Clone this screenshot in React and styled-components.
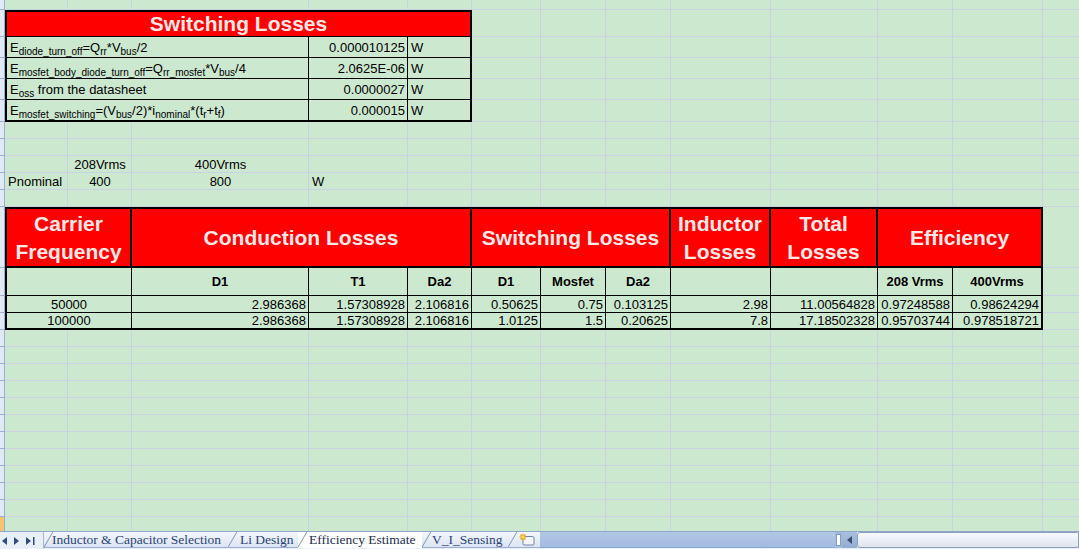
import React from 'react';
import styled, { createGlobalStyle } from 'styled-components';

const GlobalStyle = createGlobalStyle`
  *, *::before, *::after { box-sizing: border-box; }
  html, body { margin: 0; padding: 0; overflow: hidden; background: #cce8cf; }
  body { font-family: "Liberation Sans", Arial, sans-serif; color: #000; }
`;

/* column widths: row-header strip, then columns A..M */
const COLS = [5, 63, 64, 177, 99, 64, 69, 65, 65, 100, 107, 75, 90, 37];
/* row heights, top partial row first */
const ROWS = [10, 27, 21, 21, 21, 22, 17, 17, 17, 17, 17, 61, 28, 17, 17, ...Array(12).fill(17)];

const SHEET_BG = '#cce8cf';
const GRID = '#c9d1e2';

const Workbook = styled.div`
  width: 1079px;
  height: 549px;
  display: flex;
  flex-direction: column;
  overflow: hidden;
  background: ${SHEET_BG};
`;

const Sheet = styled.div`
  flex: none;
  height: 531px;
  overflow: hidden;
  display: grid;
  grid-template-columns: ${COLS.map((c) => `${c}px`).join(' ')};
  grid-template-rows: ${ROWS.map((r) => `${r}px`).join(' ')};
`;

const GridLine = styled.div`
  grid-row: ${(p) => p.$row};
  grid-column: ${(p) => p.$col};
  border-right: 1px solid ${GRID};
  border-bottom: 1px solid ${GRID};
`;

const RowHead = styled.div`
  grid-row: ${(p) => p.$row};
  grid-column: 1;
  background: ${(p) => (p.$active ? '#f6c46f' : '#e1e9f6')};
  border-right: 1px solid #9ab0d0;
  border-bottom: 1px solid #9ab0d0;
`;

const justify = { left: 'flex-start', center: 'center', right: 'flex-end' };

const Cell = styled.div`
  grid-row: ${(p) => p.$row};
  grid-column: ${(p) => p.$col};
  display: flex;
  align-items: center;
  justify-content: ${(p) => justify[p.$align || 'left']};
  text-align: ${(p) => p.$align || 'left'};
  padding: 0 ${(p) => (p.$align === 'right' ? '2px' : '3px')};
  background: ${(p) => p.$fill || 'transparent'};
  border-style: solid;
  border-color: #000;
  border-width: ${(p) => (p.$b || [0, 0, 0, 0]).map((w) => `${w}px`).join(' ')};
  font-size: 13px;
  font-weight: ${(p) => (p.$bold ? 700 : 400)};
  white-space: nowrap;
  min-width: 0;
`;

const HeadCell = styled(Cell)`
  background: #ff0000;
  color: #ffe8e6;
  font-size: 21px;
  font-weight: 700;
  line-height: 28px;
  white-space: normal;
`;

const Sub = styled.sub`
  font-size: 10px;
  vertical-align: -3px;
  line-height: 0;
`;

/* ---- sheet tab strip ---- */
const TabStrip = styled.div`
  flex: none;
  height: 18px;
  display: flex;
  align-items: stretch;
  background: #e9eff8;
  border-top: 1px solid #8fa7c9;
`;

const NavButtons = styled.div`
  flex: 0 0 44px;
  display: flex;
  align-items: center;
  gap: 6px;
  padding-left: 2px;
  border-right: 1px solid #a6b8d3;
`;

const Tab = styled.div`
  position: relative;
  flex: 0 0 ${(p) => p.$w}px;
  display: flex;
  align-items: center;
  padding-left: ${(p) => p.$pad}px;
  height: 16px;
  font-family: "Liberation Serif", "Times New Roman", serif;
  font-size: 13.5px;
  color: ${(p) => (p.$active ? '#1c2d50' : '#2a4377')};
  background: ${(p) => (p.$active ? '#ffffff' : 'linear-gradient(#f4f7fc, #dbe4f1)')};
  border-bottom: 1px solid ${(p) => (p.$active ? '#ffffff' : '#9bb0cf')};
  white-space: nowrap;
  &::before {
    content: '';
    position: absolute;
    left: 4px;
    top: 0;
    bottom: 0;
    border-left: 1px solid #7e96bd;
    transform: skewX(-30deg);
  }
`;

const Filler = styled.div`
  flex: 0 0 295px;
  background: linear-gradient(#b2c7e5, #a1badf);
  border-bottom: 1px solid #8ea6ca;
  height: 16px;
`;

const Splitter = styled.div`
  flex: 0 0 7px;
  display: flex;
  align-items: center;
  justify-content: center;
  background: #a1badf;
  height: 16px;
  &::after {
    content: '';
    width: 5px;
    height: 12px;
    background: #fff;
    border: 1px solid #8a9bb5;
  }
`;

const ScrollButton = styled.div`
  flex: 0 0 15px;
  display: flex;
  align-items: center;
  justify-content: center;
  height: 16px;
  background: linear-gradient(#a9bfdf, #93acd3);
`;

const ScrollTrack = styled.div`
  flex: 1;
  height: 16px;
  background: linear-gradient(#f7f9fc, #dfe5ee);
  border: 1px solid #8c9fbd;
  border-radius: 3px 0 0 3px;
`;

const Tri = ({ dir = 'left', bar = false, color = '#2d4b7e' }) => (
  <svg width={bar ? 9 : 6} height="8" viewBox={bar ? '0 0 9 8' : '0 0 6 8'}>
    {dir === 'left' ? (
      <polygon points="5,0 5,8 0,4" fill={color} />
    ) : (
      <polygon points="0,0 0,8 5,4" fill={color} />
    )}
    {bar && <rect x="7" y="0" width="1.5" height="8" fill={color} />}
  </svg>
);

const NewSheetIcon = () => (
  <svg width="18" height="13" viewBox="0 0 18 13">
    <path d="M5 3.5 H14.5 Q16 3.5 16 5 V11 Q16 12 15 12 H6 Q5 12 5 11 Z" fill="#f4f6fa" stroke="#6f83a6" strokeWidth="1" />
    <g stroke="#e6a21c" strokeWidth="1.2">
      <line x1="5" y1="0.5" x2="5" y2="7.5" />
      <line x1="1.5" y1="4" x2="8.5" y2="4" />
      <line x1="2.5" y1="1.5" x2="7.5" y2="6.5" />
      <line x1="7.5" y1="1.5" x2="2.5" y2="6.5" />
    </g>
    <circle cx="5" cy="4" r="1.6" fill="#ffd84a" />
  </svg>
);

/* ---- sheet content ---- */
const switchingRows = [
  {
    label: (
      <>E<Sub>diode_turn_off</Sub>=Q<Sub>rr</Sub>*V<Sub>bus</Sub>/2</>
    ),
    value: '0.000010125',
  },
  {
    label: (
      <>E<Sub>mosfet_body_diode_turn_off</Sub>=Q<Sub>rr_mosfet</Sub>*V<Sub>bus</Sub>/4</>
    ),
    value: '2.0625E-06',
  },
  {
    label: (
      <>E<Sub>oss</Sub> from the datasheet</>
    ),
    value: '0.0000027',
  },
  {
    label: (
      <>E<Sub>mosfet_switching</Sub>=(V<Sub>bus</Sub>/2)*i<Sub>nominal</Sub>*(t<Sub>r</Sub>+t<Sub>f</Sub>)</>
    ),
    value: '0.000015',
  },
];

const groupHeads = [
  { col: '2 / 4', text: ['Carrier', 'Frequency'] },
  { col: '4 / 7', text: ['Conduction Losses'] },
  { col: '7 / 10', text: ['Switching Losses'] },
  { col: '10 / 11', text: ['Inductor', 'Losses'] },
  { col: '11 / 12', text: ['Total', 'Losses'] },
  { col: '12 / 14', text: ['Efficiency'] },
];

const subCols = [
  { col: '2 / 4', text: '' },
  { col: '4', text: 'D1' },
  { col: '5', text: 'T1' },
  { col: '6', text: 'Da2' },
  { col: '7', text: 'D1' },
  { col: '8', text: 'Mosfet' },
  { col: '9', text: 'Da2' },
  { col: '10', text: '' },
  { col: '11', text: '' },
  { col: '12', text: '208 Vrms' },
  { col: '13', text: '400Vrms' },
];

const results = [
  ['50000', '2.986368', '1.57308928', '2.106816', '0.50625', '0.75', '0.103125', '2.98', '11.00564828', '0.97248588', '0.98624294'],
  ['100000', '2.986368', '1.57308928', '2.106816', '1.0125', '1.5', '0.20625', '7.8', '17.18502328', '0.95703744', '0.978518721'],
];

export default function App() {
  const background = [];
  ROWS.forEach((_, r) => {
    background.push(<RowHead key={`rh${r}`} $row={r + 1} $active={r === ROWS.length - 1} />);
    for (let c = 2; c <= COLS.length; c++) {
      background.push(<GridLine key={`g${r}-${c}`} $row={r + 1} $col={c} />);
    }
  });

  const lastSw = switchingRows.length - 1;

  return (
    <Workbook>
      <GlobalStyle />
      <Sheet>
        {background}

        {/* switching losses block */}
        <HeadCell $row={2} $col="2 / 7" $align="center" $b={[2, 2, 1, 2]}>
          Switching Losses
        </HeadCell>
        {switchingRows.map((row, i) => {
          const bottom = i === lastSw ? 2 : 1;
          return (
            <React.Fragment key={i}>
              <Cell $row={3 + i} $col="2 / 5" $fill={SHEET_BG} $b={[0, 1, bottom, 2]}>
                <span>{row.label}</span>
              </Cell>
              <Cell $row={3 + i} $col="5" $align="right" $fill={SHEET_BG} $b={[0, 1, bottom, 0]}>
                {row.value}
              </Cell>
              <Cell $row={3 + i} $col="6" $fill={SHEET_BG} $b={[0, 2, bottom, 0]}>
                W
              </Cell>
            </React.Fragment>
          );
        })}

        {/* nominal power */}
        <Cell $row={9} $col="3" $align="center">208Vrms</Cell>
        <Cell $row={9} $col="4" $align="center">400Vrms</Cell>
        <Cell $row={10} $col="2">Pnominal</Cell>
        <Cell $row={10} $col="3" $align="center">400</Cell>
        <Cell $row={10} $col="4" $align="center">800</Cell>
        <Cell $row={10} $col="5">W</Cell>

        {/* loss summary table */}
        {groupHeads.map((h, i) => (
          <HeadCell key={h.col} $row={12} $col={h.col} $align="center" $b={[2, 2, 2, i === 0 ? 2 : 0]}>
            <span>
              {h.text.map((t, k) => (
                <React.Fragment key={t}>
                  {k > 0 && <br />}
                  {t}
                </React.Fragment>
              ))}
            </span>
          </HeadCell>
        ))}
        {subCols.map((s, i) => (
          <Cell
            key={`s${i}`}
            $row={13}
            $col={s.col}
            $align="center"
            $bold
            $fill={SHEET_BG}
            $b={[0, i === subCols.length - 1 ? 2 : 1, 1, i === 0 ? 2 : 0]}
          >
            {s.text}
          </Cell>
        ))}
        {results.map((row, r) =>
          row.map((v, i) => (
            <Cell
              key={`d${r}-${i}`}
              $row={14 + r}
              $col={subCols[i].col}
              $align={i === 0 ? 'center' : 'right'}
              $fill={SHEET_BG}
              $b={[0, i === row.length - 1 ? 2 : 1, r === results.length - 1 ? 2 : 1, i === 0 ? 2 : 0]}
            >
              {v}
            </Cell>
          ))
        )}
      </Sheet>

      <TabStrip>
        <NavButtons>
          <Tri dir="left" />
          <Tri dir="right" />
          <Tri dir="right" bar />
        </NavButtons>
        <Tab $w={184} $pad={8}>Inductor &amp; Capacitor Selection</Tab>
        <Tab $w={70} $pad={12}>Li Design</Tab>
        <Tab $w={124} $pad={11} $active>Efficiency Estimate</Tab>
        <Tab $w={86} $pad={10}>V_I_Sensing</Tab>
        <Tab $w={32} $pad={10}><NewSheetIcon /></Tab>
        <Filler />
        <Splitter />
        <ScrollButton>
          <Tri dir="left" color="#3b4e70" />
        </ScrollButton>
        <ScrollTrack />
      </TabStrip>
    </Workbook>
  );
}
